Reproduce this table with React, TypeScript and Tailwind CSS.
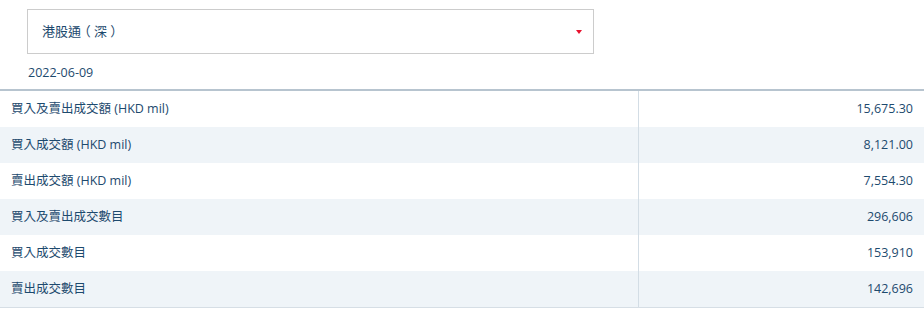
import React from "react";

type Row = { label: string; value: string };

const rows: Row[] = [
	{ label: "買入及賣出成交額 (HKD mil)", value: "15,675.30" },
	{ label: "買入成交額 (HKD mil)", value: "8,121.00" },
	{ label: "賣出成交額 (HKD mil)", value: "7,554.30" },
	{ label: "買入及賣出成交數目", value: "296,606" },
	{ label: "買入成交數目", value: "153,910" },
	{ label: "賣出成交數目", value: "142,696" },
];

export default function App() {
	return (
		<div
			className="w-[924px] h-[309px] bg-white text-[#1d4a6e] overflow-hidden"
			style={{ fontFamily: '"Open Sans", "Noto Sans CJK TC", sans-serif' }}
		>
			<div className="pl-[27px] pt-[9px]">
				<div className="w-[567px] h-[45px] border border-[#cccccc] flex items-center justify-between pl-[14px] pr-[11px]">
					<span className="text-[13px]">
						港股通
						<span className="inline-block w-[13px] text-center [font-feature-settings:'halt']">（</span>
						深
						<span className="inline-block w-[13px] text-center [font-feature-settings:'halt']">）</span>
					</span>
					<span className="w-0 h-0 border-l-[3.5px] border-r-[3.5px] border-t-[4px] border-l-transparent border-r-transparent border-t-[#e8112d]" />
				</div>
				<div className="text-[12.5px] mt-[10px] pl-px leading-[18px]">2022-06-09</div>
			</div>
			<div className="mt-[7px] border-t-2 border-[#b7c4cf] border-b border-b-[#d6dee5]">
				{rows.map((row, i) => (
					<div
						key={row.label}
						className={`flex h-[36px] items-center text-[12.5px] ${i % 2 === 1 ? "bg-[#eff4f8]" : "bg-white"}`}
					>
						<div className="w-[639px] pl-[11px] h-full flex items-center border-r border-[#d3dde5]">
							{row.label}
						</div>
						<div className="flex-1 text-right pr-[11px]">{row.value}</div>
					</div>
				))}
			</div>
		</div>
	);
}
